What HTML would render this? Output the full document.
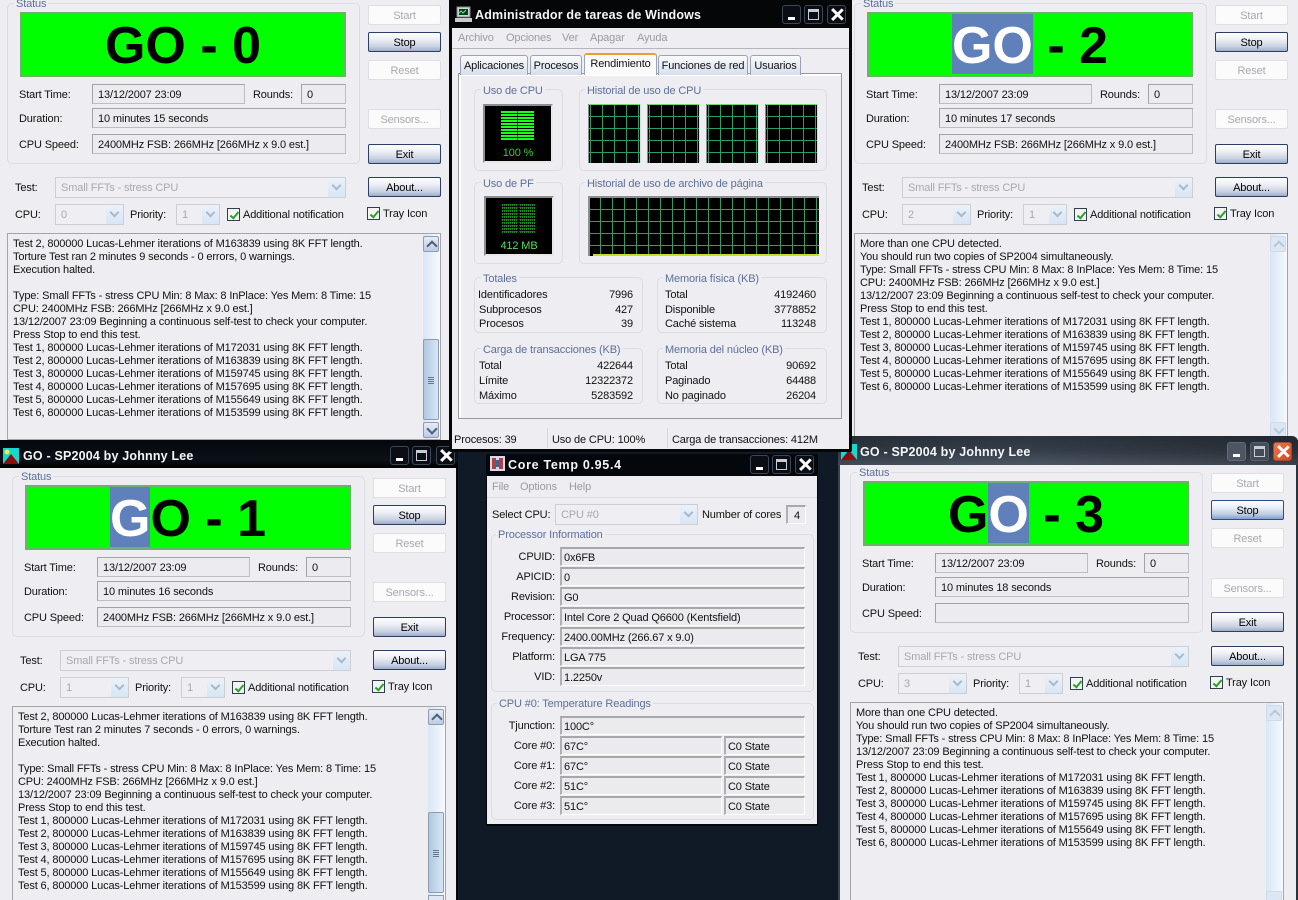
<!DOCTYPE html>
<html><head><meta charset="utf-8"><title>SP2004 Core Temp</title>
<style>
html,body{margin:0;padding:0;width:1298px;height:900px;overflow:hidden}
body{position:relative;background:#0f1a26;font:11px/15px "Liberation Sans",sans-serif;color:#111;letter-spacing:-.14px}
#root{position:absolute;left:0;top:0;width:1298px;height:900px;overflow:hidden}
div,span.t{box-sizing:border-box}
.a,.t,.b,.f,.g,.l,.cb,.ck,.r,.m{position:absolute}
.a{left:0;top:0}
.t,.l{white-space:nowrap}
.t,.lb,.r,.l{transform:translateY(1px)}
.bg{position:absolute;background:#eeedf2}
.g{border:1px solid #dddce3;border-radius:5px}
.l{color:#5d7099;background:#eeedf2;padding:0 2px;line-height:15px}
.b{width:73px;height:20px;left:368px;text-align:center;line-height:20px;border-radius:2px}
.off{background:#fbfbfc;border:1px solid #dfdfe3;color:#a9a9ad}
.on{background:linear-gradient(#fdfdfe 0,#eef0f5 35%,#c9d2e2 75%,#9fadc8 100%);border:1px solid #2a3e66;color:#000}
.foc{border:1px solid #24518f;background:linear-gradient(#fff 0,#eaf0f8 35%,#bccce4 75%,#7f9ed0 100%)}
.f{background:#ecebf0;border:1px solid #a3a3a7;border-bottom-color:#bdbdc2;border-right-color:#bdbdc2;padding-left:5px;line-height:20px;white-space:nowrap;overflow:hidden}
.cf{background:#ebeaef;border-top:2px solid #a8a8ac;border-left:2px solid #b0b0b4;border-bottom:1px solid #fff;border-right:1px solid #fff;padding-left:2px;line-height:18px;white-space:nowrap;overflow:hidden;position:absolute;height:19px}
.cb{background:#efeef3;border:1px solid #cfced2;color:#a9a9ad;padding-left:5px;line-height:21px;height:21px}
.cb i{position:absolute;right:0;top:0;bottom:0;width:17px;background:linear-gradient(#eaf1fa,#d8e6f5)}
.cb i:after{content:"";position:absolute;left:5px;top:4px;width:5px;height:5px;border-right:2px solid #a9b9cc;border-bottom:2px solid #a9b9cc;transform:rotate(45deg)}
.ck{width:13px;height:13px;border:1px solid #2e4050;background:#f4f4f4}
.ck:after{content:"";position:absolute;left:3.5px;top:.5px;width:3px;height:7px;border-right:2.4px solid #2aa02a;border-bottom:2.4px solid #2aa02a;transform:rotate(40deg)}
.go{position:absolute;left:20px;top:12px;width:326px;height:65px;background:#00ff00;border:2px solid #6fb06f;text-align:center;font:bold 52px/64px "Liberation Sans",sans-serif;color:#000;letter-spacing:0;white-space:pre;overflow:hidden}
.go span{display:inline-block;background:#6080bb;color:#fff;height:60px}
.tb{position:absolute;left:7px;top:233px;width:434px;height:207px;background:#eeedf2;border:1px solid #a5a5a9;overflow:hidden}
.tx{position:absolute;left:5px;top:4px;white-space:pre;line-height:13px}
.sc{position:absolute;right:0;top:0;width:17px;height:205px;background:linear-gradient(90deg,#d8e6f6,#f6f9fe)}
.su,.sd{position:absolute;left:0;width:16px;height:16px;background:linear-gradient(#e4ecf6,#bccde2);border:1px solid #8e9bb0;border-radius:2px}
.su{top:2px}.sd{top:188px}
.su:after,.sd:after{content:"";position:absolute;left:4px;width:6px;height:6px;border-color:#4d5d78;border-style:solid;border-width:2px 0 0 2px;transform:rotate(45deg);top:5px}
.sd:after{transform:rotate(225deg);top:2px}
.th{position:absolute;left:0;top:105px;width:16px;height:81px;background:linear-gradient(90deg,#b0c8e2,#d7e6f6);border:1px solid #8e9bb0;border-radius:2px}
.th:after{content:"";position:absolute;left:4px;top:37px;width:6px;height:7px;background:repeating-linear-gradient(#67768e 0 1px,transparent 1px 2px)}
.dis .su,.dis .sd{background:#dce7f4;border-color:#d0dbe9}
.dis .su:after,.dis .sd:after{border-color:#b8c6d8}
.tt{position:absolute;color:#f4f6f8;font:bold 12.5px/14px "Liberation Sans",sans-serif;letter-spacing:.18px;white-space:nowrap}
.wb{position:absolute;width:19px;height:19px;border:1px solid #3b4656;border-radius:3px;background:#0a0e14}
.wb.mn:after{content:"";position:absolute;left:5px;bottom:3px;width:7px;height:3px;background:#fff}
.wb.mx:after{content:"";position:absolute;left:3px;top:3px;width:11px;height:11px;border:1px solid #c8ccd2;border-top-width:3px;box-sizing:border-box}
.wb.cl:before,.wb.cl:after{content:"";position:absolute;left:7.5px;top:1px;width:2.5px;height:15px;background:#fff;transform:rotate(45deg)}
.wb.cl:after{transform:rotate(-45deg)}
.bk{position:absolute;background:#000;border:2px solid #8e8e92;border-bottom-color:#e8e8ea;border-right-color:#e8e8ea}
.tab{position:absolute;height:20px;top:55px;background:linear-gradient(#fafbfd,#d6deec);border:1px solid #9aa3b5;border-bottom:0;border-radius:3px 3px 0 0;text-align:center;line-height:21px;white-space:nowrap}
.gr{color:#9c9ca0}
.r{text-align:right;white-space:nowrap}
.lb{position:absolute;width:60px;text-align:right;white-space:nowrap;left:495px}
</style></head><body><div id="root">

<!-- Window 0 -->
<div class="bg" style="left:0;top:0;width:449px;height:441px"></div>
<div class="a">
<div class="g" style="left:7px;top:3px;width:353px;height:161px"></div><span class="l" style="left:14px;top:-4px">Status</span>
<div class="go">GO - 0</div>
<span class="t" style="left:19px;top:87px">Start Time:</span><div class="f" style="left:92px;top:84px;width:153px;height:20px">13/12/2007 23:09</div>
<span class="t" style="left:253px;top:87px">Rounds:</span><div class="f" style="left:301px;top:84px;width:45px;height:20px">0</div>
<span class="t" style="left:19px;top:111px">Duration:</span><div class="f" style="left:92px;top:108px;width:254px;height:20px">10 minutes 15 seconds</div>
<span class="t" style="left:19px;top:137px">CPU Speed:</span><div class="f" style="left:92px;top:134px;width:254px;height:20px">2400MHz FSB: 266MHz [266MHz x 9.0 est.]</div>
<div class="b off" style="top:5px">Start</div><div class="b on" style="top:32px">Stop</div><div class="b off" style="top:60px">Reset</div><div class="b off" style="top:109px">Sensors...</div><div class="b on" style="top:144px">Exit</div><div class="b on" style="top:177px">About...</div>
<span class="t" style="left:15px;top:180px">Test:</span><div class="cb" style="left:55px;top:177px;width:291px">Small FFTs - stress CPU<i></i></div>
<span class="t" style="left:15px;top:207px">CPU:</span><div class="cb" style="left:55px;top:204px;width:69px">0<i></i></div>
<span class="t" style="left:130px;top:207px">Priority:</span><div class="cb" style="left:176px;top:204px;width:44px">1<i></i></div>
<div class="ck" style="left:227px;top:208px"></div><span class="t" style="left:243px;top:207px">Additional notification</span>
<div class="ck" style="left:367px;top:207px"></div><span class="t" style="left:383px;top:206px">Tray Icon</span>
<div class="tb"><div class="tx">Test 2, 800000 Lucas-Lehmer iterations of M163839 using 8K FFT length.
Torture Test ran 2 minutes 9 seconds - 0 errors, 0 warnings.
Execution halted.

Type: Small FFTs - stress CPU Min: 8 Max: 8 InPlace: Yes Mem: 8 Time: 15
CPU: 2400MHz FSB: 266MHz [266MHz x 9.0 est.]
13/12/2007 23:09 Beginning a continuous self-test to check your computer.
Press Stop to end this test.
Test 1, 800000 Lucas-Lehmer iterations of M172031 using 8K FFT length.
Test 2, 800000 Lucas-Lehmer iterations of M163839 using 8K FFT length.
Test 3, 800000 Lucas-Lehmer iterations of M159745 using 8K FFT length.
Test 4, 800000 Lucas-Lehmer iterations of M157695 using 8K FFT length.
Test 5, 800000 Lucas-Lehmer iterations of M155649 using 8K FFT length.
Test 6, 800000 Lucas-Lehmer iterations of M153599 using 8K FFT length.</div>
<div class="sc"><div class="su"></div><div class="th"></div><div class="sd"></div></div></div>
</div>

<!-- Window 2 -->
<div class="bg" style="left:852px;top:0;width:446px;height:440px"></div>
<div class="a" style="left:847px">
<div class="g" style="left:7px;top:3px;width:353px;height:161px"></div><span class="l" style="left:14px;top:-4px">Status</span>
<div class="go"><span>GO</span> - 2</div>
<span class="t" style="left:19px;top:87px">Start Time:</span><div class="f" style="left:92px;top:84px;width:153px;height:20px">13/12/2007 23:09</div>
<span class="t" style="left:253px;top:87px">Rounds:</span><div class="f" style="left:301px;top:84px;width:45px;height:20px">0</div>
<span class="t" style="left:19px;top:111px">Duration:</span><div class="f" style="left:92px;top:108px;width:254px;height:20px">10 minutes 17 seconds</div>
<span class="t" style="left:19px;top:137px">CPU Speed:</span><div class="f" style="left:92px;top:134px;width:254px;height:20px">2400MHz FSB: 266MHz [266MHz x 9.0 est.]</div>
<div class="b off" style="top:5px">Start</div><div class="b on" style="top:32px">Stop</div><div class="b off" style="top:60px">Reset</div><div class="b off" style="top:109px">Sensors...</div><div class="b on" style="top:144px">Exit</div><div class="b on" style="top:177px">About...</div>
<span class="t" style="left:15px;top:180px">Test:</span><div class="cb" style="left:55px;top:177px;width:291px">Small FFTs - stress CPU<i></i></div>
<span class="t" style="left:15px;top:207px">CPU:</span><div class="cb" style="left:55px;top:204px;width:69px">2<i></i></div>
<span class="t" style="left:130px;top:207px">Priority:</span><div class="cb" style="left:176px;top:204px;width:44px">1<i></i></div>
<div class="ck" style="left:227px;top:208px"></div><span class="t" style="left:243px;top:207px">Additional notification</span>
<div class="ck" style="left:367px;top:207px"></div><span class="t" style="left:383px;top:206px">Tray Icon</span>
<div class="tb dis"><div class="tx">More than one CPU detected.
You should run two copies of SP2004 simultaneously.
Type: Small FFTs - stress CPU Min: 8 Max: 8 InPlace: Yes Mem: 8 Time: 15
CPU: 2400MHz FSB: 266MHz [266MHz x 9.0 est.]
13/12/2007 23:09 Beginning a continuous self-test to check your computer.
Press Stop to end this test.
Test 1, 800000 Lucas-Lehmer iterations of M172031 using 8K FFT length.
Test 2, 800000 Lucas-Lehmer iterations of M163839 using 8K FFT length.
Test 3, 800000 Lucas-Lehmer iterations of M159745 using 8K FFT length.
Test 4, 800000 Lucas-Lehmer iterations of M157695 using 8K FFT length.
Test 5, 800000 Lucas-Lehmer iterations of M155649 using 8K FFT length.
Test 6, 800000 Lucas-Lehmer iterations of M153599 using 8K FFT length.</div>
<div class="sc"><div class="su"></div><div class="sd"></div></div></div>
</div>

<!-- Window 1 -->
<div class="bg" style="left:0;top:441px;width:458px;height:459px;border-right:2px solid #05080c"></div>
<div style="position:absolute;left:0;top:440px;width:458px;height:28px;background:linear-gradient(#05070b,#0b1118 70%,#000)"></div>
<svg style="position:absolute;left:3px;top:448px" width="16" height="16"><rect width="16" height="16" fill="#18d6d0"/><circle cx="4" cy="4" r="2.5" fill="#e8f040"/><path d="M0 16 L8 6 L16 16Z" fill="#8a0d10"/></svg>
<span class="tt" style="left:23px;top:449px">GO - SP2004 by Johnny Lee</span>
<div class="wb mn" style="left:390px;top:446px"></div><div class="wb mx" style="left:412px;top:446px"></div><div class="wb cl" style="left:436px;top:446px"></div>
<div class="a" style="left:5px;top:473px">
<div class="g" style="left:7px;top:3px;width:353px;height:161px"></div><span class="l" style="left:14px;top:-4px">Status</span>
<div class="go"><span>G</span>O - 1</div>
<span class="t" style="left:19px;top:87px">Start Time:</span><div class="f" style="left:92px;top:84px;width:153px;height:20px">13/12/2007 23:09</div>
<span class="t" style="left:253px;top:87px">Rounds:</span><div class="f" style="left:301px;top:84px;width:45px;height:20px">0</div>
<span class="t" style="left:19px;top:111px">Duration:</span><div class="f" style="left:92px;top:108px;width:254px;height:20px">10 minutes 16 seconds</div>
<span class="t" style="left:19px;top:137px">CPU Speed:</span><div class="f" style="left:92px;top:134px;width:254px;height:20px">2400MHz FSB: 266MHz [266MHz x 9.0 est.]</div>
<div class="b off" style="top:5px">Start</div><div class="b on" style="top:32px">Stop</div><div class="b off" style="top:60px">Reset</div><div class="b off" style="top:109px">Sensors...</div><div class="b on" style="top:144px">Exit</div><div class="b on" style="top:177px">About...</div>
<span class="t" style="left:15px;top:180px">Test:</span><div class="cb" style="left:55px;top:177px;width:291px">Small FFTs - stress CPU<i></i></div>
<span class="t" style="left:15px;top:207px">CPU:</span><div class="cb" style="left:55px;top:204px;width:69px">1<i></i></div>
<span class="t" style="left:130px;top:207px">Priority:</span><div class="cb" style="left:176px;top:204px;width:44px">1<i></i></div>
<div class="ck" style="left:227px;top:208px"></div><span class="t" style="left:243px;top:207px">Additional notification</span>
<div class="ck" style="left:367px;top:207px"></div><span class="t" style="left:383px;top:206px">Tray Icon</span>
<div class="tb" style="height:194px;border-bottom:0"><div class="tx">Test 2, 800000 Lucas-Lehmer iterations of M163839 using 8K FFT length.
Torture Test ran 2 minutes 7 seconds - 0 errors, 0 warnings.
Execution halted.

Type: Small FFTs - stress CPU Min: 8 Max: 8 InPlace: Yes Mem: 8 Time: 15
CPU: 2400MHz FSB: 266MHz [266MHz x 9.0 est.]
13/12/2007 23:09 Beginning a continuous self-test to check your computer.
Press Stop to end this test.
Test 1, 800000 Lucas-Lehmer iterations of M172031 using 8K FFT length.
Test 2, 800000 Lucas-Lehmer iterations of M163839 using 8K FFT length.
Test 3, 800000 Lucas-Lehmer iterations of M159745 using 8K FFT length.
Test 4, 800000 Lucas-Lehmer iterations of M157695 using 8K FFT length.
Test 5, 800000 Lucas-Lehmer iterations of M155649 using 8K FFT length.
Test 6, 800000 Lucas-Lehmer iterations of M153599 using 8K FFT length.</div>
<div class="sc" style="height:193px"><div class="su"></div><div class="th"></div><div style="position:absolute;left:0;top:188px;width:16px;height:5px;background:#dfe7f2;border:1px solid #8e9bb0;border-bottom:0"></div></div></div>
</div>

<!-- Window 3 -->
<div class="bg" style="left:838px;top:440px;width:460px;height:460px;border-left:2px solid #39424e;border-right:2px solid #2b333d"></div>
<div style="position:absolute;left:838px;top:436px;width:460px;height:29px;border-radius:6px 6px 0 0;background:linear-gradient(90deg,rgba(0,0,0,.15),rgba(0,0,0,0) 40%,rgba(0,0,0,.25)),linear-gradient(#2c343f,#353e4a 50%,#4d5764)"></div>
<svg style="position:absolute;left:841px;top:444px" width="16" height="16"><rect width="16" height="16" fill="#18d6d0"/><circle cx="4" cy="4" r="2.5" fill="#e8f040"/><path d="M0 16 L8 6 L16 16Z" fill="#8a0d10"/></svg>
<span class="tt" style="left:860px;top:445px">GO - SP2004 by Johnny Lee</span>
<div class="wb mn" style="left:1227px;top:442px;background:#4c5663;border-color:#606a78"></div><div class="wb mx" style="left:1250px;top:442px;background:#434c59;border-color:#566070"></div><div class="wb cl" style="left:1273px;top:442px;background:linear-gradient(135deg,#ea7a50,#d8431c);border-color:#a04a30"></div>
<div class="a" style="left:843px;top:469px">
<div class="g" style="left:7px;top:3px;width:353px;height:161px"></div><span class="l" style="left:14px;top:-4px">Status</span>
<div class="go">G<span>O</span> - 3</div>
<span class="t" style="left:19px;top:87px">Start Time:</span><div class="f" style="left:92px;top:84px;width:153px;height:20px">13/12/2007 23:09</div>
<span class="t" style="left:253px;top:87px">Rounds:</span><div class="f" style="left:301px;top:84px;width:45px;height:20px">0</div>
<span class="t" style="left:19px;top:111px">Duration:</span><div class="f" style="left:92px;top:108px;width:254px;height:20px">10 minutes 18 seconds</div>
<span class="t" style="left:19px;top:137px">CPU Speed:</span><div class="f" style="left:92px;top:134px;width:254px;height:20px"></div>
<div class="b off" style="top:4px">Start</div><div class="b on foc" style="top:31px">Stop</div><div class="b off" style="top:59px">Reset</div><div class="b off" style="top:109px">Sensors...</div><div class="b on" style="top:143px">Exit</div><div class="b on" style="top:177px">About...</div>
<span class="t" style="left:15px;top:180px">Test:</span><div class="cb" style="left:55px;top:177px;width:291px">Small FFTs - stress CPU<i></i></div>
<span class="t" style="left:15px;top:207px">CPU:</span><div class="cb" style="left:55px;top:204px;width:69px">3<i></i></div>
<span class="t" style="left:130px;top:207px">Priority:</span><div class="cb" style="left:176px;top:204px;width:44px">1<i></i></div>
<div class="ck" style="left:227px;top:208px"></div><span class="t" style="left:243px;top:207px">Additional notification</span>
<div class="ck" style="left:367px;top:207px"></div><span class="t" style="left:383px;top:206px">Tray Icon</span>
<div class="tb dis" style="height:198px;border-bottom:0"><div class="tx">More than one CPU detected.
You should run two copies of SP2004 simultaneously.
Type: Small FFTs - stress CPU Min: 8 Max: 8 InPlace: Yes Mem: 8 Time: 15
13/12/2007 23:09 Beginning a continuous self-test to check your computer.
Press Stop to end this test.
Test 1, 800000 Lucas-Lehmer iterations of M172031 using 8K FFT length.
Test 2, 800000 Lucas-Lehmer iterations of M163839 using 8K FFT length.
Test 3, 800000 Lucas-Lehmer iterations of M159745 using 8K FFT length.
Test 4, 800000 Lucas-Lehmer iterations of M157695 using 8K FFT length.
Test 5, 800000 Lucas-Lehmer iterations of M155649 using 8K FFT length.
Test 6, 800000 Lucas-Lehmer iterations of M153599 using 8K FFT length.</div>
<div class="sc" style="height:197px"><div class="su"></div><div style="position:absolute;left:0;top:188px;width:16px;height:9px;background:#dce7f4;border:1px solid #d0dbe9;border-bottom:0"></div></div></div>
</div>

<!-- Task Manager -->
<div style="position:absolute;left:449px;top:0;width:403px;height:452px;background:#040608;border-radius:0 0 2px 2px"></div>
<div class="bg" style="left:452px;top:28px;width:397px;height:421px"></div>
<svg style="position:absolute;left:455px;top:6px" width="17" height="17"><rect x="2" y="1" width="13" height="10" fill="#d0d4d8" stroke="#888"/><rect x="4" y="3" width="9" height="6" fill="#0a3a2a"/><path d="M4 7l2-2 2 2 3-3" stroke="#4f4" fill="none"/><rect x="0" y="12" width="17" height="4" fill="#c8ccd0"/></svg>
<span class="tt" style="left:475px;top:8px">Administrador de tareas de Windows</span>
<div class="wb mn" style="left:782px;top:5px"></div><div class="wb mx" style="left:804px;top:5px"></div><div class="wb cl" style="left:827px;top:5px"></div>
<span class="t gr" style="left:458px;top:30px">Archivo</span><span class="t gr" style="left:506px;top:30px">Opciones</span><span class="t gr" style="left:562px;top:30px">Ver</span><span class="t gr" style="left:590px;top:30px">Apagar</span><span class="t gr" style="left:637px;top:30px">Ayuda</span>
<div style="position:absolute;left:452px;top:48px;width:397px;height:1px;background:#b5b5ba"></div>
<div style="position:absolute;left:458px;top:73px;width:384px;height:346px;background:#eeedf2;border:1px solid #9a9a9e;box-shadow:inset 2px 2px 0 #fff"></div>
<div class="tab" style="left:460px;width:68px">Aplicaciones</div>
<div class="tab" style="left:530px;width:52px">Procesos</div>
<div class="tab" style="left:584px;width:73px;top:53px;height:22px;background:#fbfbfc;border-top:2px solid #e8a030;line-height:19px;z-index:2;border-bottom:0">Rendimiento</div>
<div class="tab" style="left:658px;width:90px">Funciones de red</div>
<div class="tab" style="left:750px;width:51px">Usuarios</div>

<div class="g" style="left:474px;top:89px;width:89px;height:82px"></div><span class="l" style="left:481px;top:83px">Uso de CPU</span>
<div class="g" style="left:579px;top:89px;width:248px;height:82px"></div><span class="l" style="left:585px;top:83px">Historial de uso de CPU</span>
<div class="g" style="left:474px;top:182px;width:89px;height:82px"></div><span class="l" style="left:481px;top:176px">Uso de PF</span>
<div class="g" style="left:579px;top:182px;width:248px;height:82px"></div><span class="l" style="left:585px;top:176px">Historial de uso de archivo de página</span>
<div class="bk" style="left:483px;top:104px;width:70px;height:59px"></div>
<div class="bk" style="left:484px;top:196px;width:70px;height:60px"></div>

<svg style="position:absolute;left:0;top:0" width="1298" height="900">
<defs>
<pattern id="gc" x="2" y="0" width="12" height="12" patternUnits="userSpaceOnUse"><path d="M.5 0V12M0 .5H12" stroke="#2a9d62" stroke-width="1" fill="none"/></pattern>
<pattern id="gp" x="0" y="1" width="12" height="12" patternUnits="userSpaceOnUse"><path d="M.5 0V12M0 .5H12" stroke="#2a9d62" stroke-width="1" fill="none"/></pattern>
<pattern id="bars" x="0" y="111" width="3" height="3" patternUnits="userSpaceOnUse"><rect width="3" height="2" fill="#1cff1c"/></pattern>
<pattern id="dots" x="0" y="204" width="2" height="3" patternUnits="userSpaceOnUse"><rect width="1" height="2" fill="#1c8a1c"/><rect x="1" width="1" height="1" fill="#145a14"/></pattern>
</defs>
<rect x="501" y="111" width="33" height="29" fill="url(#bars)"/><rect x="517" y="111" width="1" height="29" fill="#000"/>
<rect x="502" y="204" width="33" height="29" fill="url(#dots)"/><rect x="518" y="204" width="1" height="29" fill="#000"/>
<g transform="translate(588 104)"><rect width="53" height="59" fill="#000"/><rect width="53" height="59" fill="url(#gc)"/><rect width="52" height="1" fill="#6fd86f"/><rect width="1" height="59" fill="#8f8a96"/><rect x="52" width="1" height="59" fill="#dcdce0"/></g>
<g transform="translate(647 104)"><rect width="53" height="59" fill="#000"/><rect width="53" height="59" fill="url(#gc)"/><rect width="52" height="1" fill="#6fd86f"/><rect width="1" height="59" fill="#8f8a96"/><rect x="52" width="1" height="59" fill="#dcdce0"/></g>
<g transform="translate(706 104)"><rect width="53" height="59" fill="#000"/><rect width="53" height="59" fill="url(#gc)"/><rect width="52" height="1" fill="#6fd86f"/><rect width="1" height="59" fill="#8f8a96"/><rect x="52" width="1" height="59" fill="#dcdce0"/></g>
<g transform="translate(765 104)"><rect width="53" height="59" fill="#000"/><rect width="53" height="59" fill="url(#gc)"/><rect width="52" height="1" fill="#6fd86f"/><rect width="1" height="59" fill="#8f8a96"/><rect x="52" width="1" height="59" fill="#dcdce0"/></g>
<g transform="translate(588 196)"><rect width="231" height="60" fill="#000"/><rect y="2" width="231" height="57" fill="url(#gp)"/><rect width="231" height="2" fill="#8e8e92"/><rect width="2" height="60" fill="#8e8e92"/><rect x="5" y="58" width="226" height="2" fill="#c8e020"/></g>
</svg>
<span class="t" style="left:483px;width:70px;text-align:center;top:145px;color:#2fd02f">100 %</span>
<span class="t" style="left:484px;width:70px;text-align:center;top:238px;color:#4fe04f">412 MB</span>

<div class="g" style="left:474px;top:277px;width:169px;height:56px"></div><span class="l" style="left:481px;top:271px">Totales</span>
<div class="g" style="left:657px;top:277px;width:170px;height:56px"></div><span class="l" style="left:663px;top:271px">Memoria física (KB)</span>
<div class="g" style="left:474px;top:348px;width:169px;height:56px"></div><span class="l" style="left:481px;top:342px">Carga de transacciones (KB)</span>
<div class="g" style="left:657px;top:348px;width:170px;height:56px"></div><span class="l" style="left:663px;top:342px">Memoria del núcleo (KB)</span>
<span class="t" style="left:478px;top:287px">Identificadores</span><span class="r" style="left:583px;width:50px;top:287px">7996</span>
<span class="t" style="left:479px;top:302px">Subprocesos</span><span class="r" style="left:583px;width:50px;top:302px">427</span>
<span class="t" style="left:479px;top:316px">Procesos</span><span class="r" style="left:583px;width:50px;top:316px">39</span>
<span class="t" style="left:665px;top:287px">Total</span><span class="r" style="left:756px;width:60px;top:287px">4192460</span>
<span class="t" style="left:665px;top:302px">Disponible</span><span class="r" style="left:756px;width:60px;top:302px">3778852</span>
<span class="t" style="left:665px;top:316px">Caché sistema</span><span class="r" style="left:756px;width:60px;top:316px">113248</span>
<span class="t" style="left:479px;top:358px">Total</span><span class="r" style="left:573px;width:60px;top:358px">422644</span>
<span class="t" style="left:479px;top:373px">Límite</span><span class="r" style="left:573px;width:60px;top:373px">12322372</span>
<span class="t" style="left:479px;top:388px">Máximo</span><span class="r" style="left:573px;width:60px;top:388px">5283592</span>
<span class="t" style="left:665px;top:358px">Total</span><span class="r" style="left:756px;width:60px;top:358px">90692</span>
<span class="t" style="left:665px;top:373px">Paginado</span><span class="r" style="left:756px;width:60px;top:373px">64488</span>
<span class="t" style="left:665px;top:388px">No paginado</span><span class="r" style="left:756px;width:60px;top:388px">26204</span>
<span class="t" style="left:454px;top:432px">Procesos: 39</span><span class="t" style="left:552px;top:432px">Uso de CPU: 100%</span><span class="t" style="left:672px;top:432px">Carga de transacciones: 412M</span>
<div style="position:absolute;left:547px;top:428px;width:1px;height:20px;background:#d5d5da"></div><div style="position:absolute;left:667px;top:428px;width:1px;height:20px;background:#d5d5da"></div>

<!-- Core Temp -->
<div style="position:absolute;left:486px;top:454px;width:332px;height:372px;background:#04070b;border-radius:2px"></div>
<div class="bg" style="left:487px;top:476px;width:330px;height:348px"></div>
<svg style="position:absolute;left:490px;top:456px" width="15" height="15"><rect width="15" height="15" fill="#d8d8e8"/><path d="M2 2h4v11H2zM9 2h4v11H9z" fill="#b04040"/><path d="M6 4h3v7H6z" fill="#4060a0"/></svg>
<span class="tt" style="left:508px;top:458px;letter-spacing:.7px">Core Temp 0.95.4</span>
<div class="wb mn" style="left:750px;top:455px"></div><div class="wb mx" style="left:772px;top:455px"></div><div class="wb cl" style="left:795px;top:455px"></div>
<span class="t gr" style="left:492px;top:479px">File</span><span class="t gr" style="left:520px;top:479px">Options</span><span class="t gr" style="left:569px;top:479px">Help</span>
<div style="position:absolute;left:487px;top:497px;width:330px;height:1px;background:#dcdce0"></div>
<span class="t" style="left:492px;top:507px">Select CPU:</span><div class="cb" style="left:555px;top:504px;width:143px">CPU #0<i></i></div>
<span class="t" style="left:702px;top:507px">Number of cores</span><div class="cf" style="left:786px;top:505px;width:20px;height:19px;padding-left:6px">4</div>
<div class="g" style="left:491px;top:534px;width:323px;height:158px"></div><span class="l" style="left:496px;top:527px">Processor Information</span>
<span class="lb" style="top:549px">CPUID:</span><div class="cf" style="left:560px;top:547px;width:245px">0x6FB</div>
<span class="lb" style="top:569px">APICID:</span><div class="cf" style="left:560px;top:567px;width:245px">0</div>
<span class="lb" style="top:589px">Revision:</span><div class="cf" style="left:560px;top:587px;width:245px">G0</div>
<span class="lb" style="top:609px">Processor:</span><div class="cf" style="left:560px;top:607px;width:245px">Intel Core 2 Quad Q6600 (Kentsfield)</div>
<span class="lb" style="top:629px">Frequency:</span><div class="cf" style="left:560px;top:627px;width:245px">2400.00MHz (266.67 x 9.0)</div>
<span class="lb" style="top:649px">Platform:</span><div class="cf" style="left:560px;top:647px;width:245px">LGA 775</div>
<span class="lb" style="top:669px">VID:</span><div class="cf" style="left:560px;top:667px;width:245px">1.2250v</div>
<div class="g" style="left:491px;top:703px;width:323px;height:117px"></div><span class="l" style="left:497px;top:696px">CPU #0: Temperature Readings</span>
<span class="lb" style="top:718px">Tjunction:</span><div class="cf" style="left:560px;top:716px;width:245px">100C°</div>
<span class="lb" style="top:738px">Core #0:</span><div class="cf" style="left:560px;top:736px;width:162px">67C°</div><div class="cf" style="left:724px;top:736px;width:81px">C0 State</div>
<span class="lb" style="top:758px">Core #1:</span><div class="cf" style="left:560px;top:756px;width:162px">67C°</div><div class="cf" style="left:724px;top:756px;width:81px">C0 State</div>
<span class="lb" style="top:778px">Core #2:</span><div class="cf" style="left:560px;top:776px;width:162px">51C°</div><div class="cf" style="left:724px;top:776px;width:81px">C0 State</div>
<span class="lb" style="top:798px">Core #3:</span><div class="cf" style="left:560px;top:796px;width:162px">51C°</div><div class="cf" style="left:724px;top:796px;width:81px">C0 State</div>
</div></body></html>
